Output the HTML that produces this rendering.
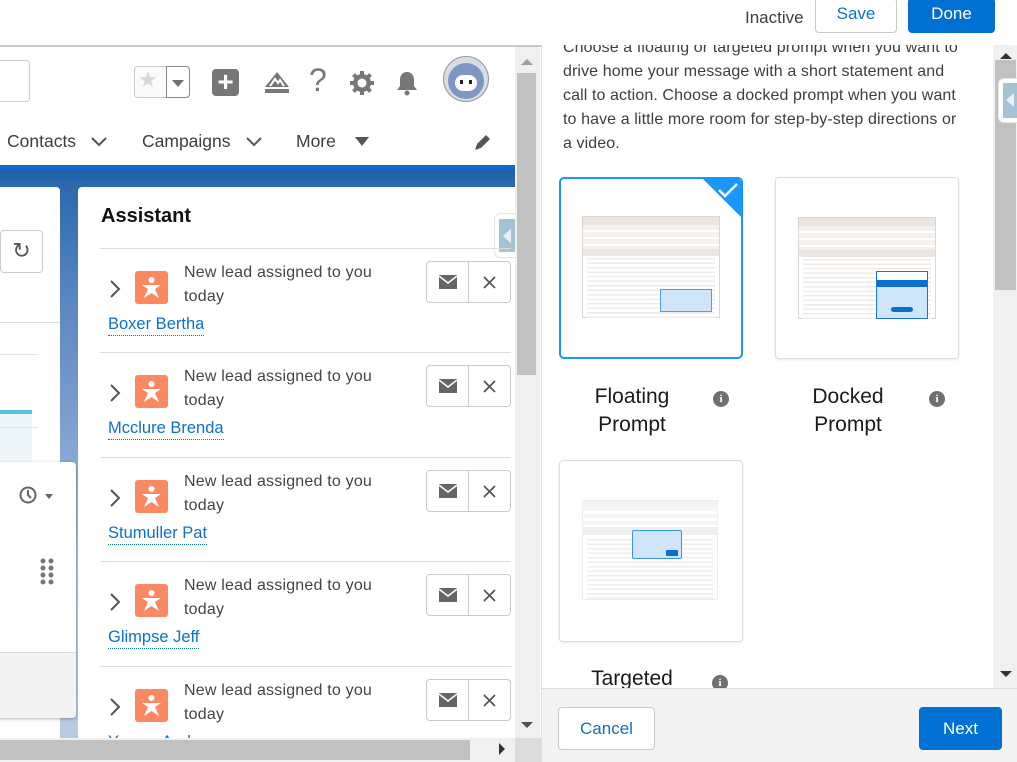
<!DOCTYPE html>
<html><head><meta charset="utf-8"><style>
*{box-sizing:border-box;margin:0;padding:0}
body{width:1017px;height:762px;overflow:hidden;background:#fff;font-family:"Liberation Sans",sans-serif;position:relative;color:#3e3e3c}
.a{position:absolute}
.btn{position:absolute;border:1px solid #c9c9c9;border-radius:4px;background:#fff;font-size:17px;text-align:center}
.item{position:absolute;left:100px;width:411px;height:105px;border-top:1px solid #ddd}
.item .chev{position:absolute;left:8px;top:30px}
.item .ic{position:absolute;left:35px;top:22px;width:33px;height:33px;background:#f88962;border-radius:3px}
.item .t{position:absolute;left:84px;top:12px;font-size:16px;line-height:24px;color:#444;width:210px;letter-spacing:0.2px}
.item .n{position:absolute;left:8px;top:64px;font-size:16.5px;color:#0b71c9;border-bottom:1px dotted #0b71c9;line-height:22px}
.item .bg{position:absolute;left:326px;top:12px;width:85px;height:42px;border:1px solid #c9c9c9;border-radius:4px;background:#fff}
.item .bg i{position:absolute;left:41px;top:0;width:1px;height:40px;background:#c9c9c9}
.card{position:absolute;border:1px solid #ddd;border-radius:4px;background:#fff}
.lbl{position:absolute;font-size:21px;line-height:28px;color:#1a1a1a;text-align:center}
.info{position:absolute;width:16px;height:16px;border-radius:50%;background:#707070;color:#fff;font-size:11px;font-weight:bold;text-align:center;line-height:16px;font-family:"Liberation Serif",serif}
</style></head><body>
<!-- top bar -->
<div class="a" style="left:0;top:45px;width:541px;height:2px;background:#c8c8c8"></div>
<div class="a" style="left:745px;top:8px;font-size:17px;color:#3e3e3c">Inactive</div>
<div class="btn" style="left:815px;top:-2px;width:82px;height:35px;color:#0b71c9;line-height:30px">Save</div>
<div class="btn" style="left:908px;top:-2px;width:87px;height:35px;background:#0070d2;border-color:#0070d2;color:#fff;line-height:30px">Done</div>

<!-- left pane -->
<div class="a" style="left:0;top:47px;width:515px;height:691px;overflow:hidden;background:#fff">
  <div class="a" style="left:-10px;top:13px;width:40px;height:42px;border:1px solid #ccc;border-radius:4px"></div>
  <div class="a" style="left:134px;top:19px;width:56px;height:32px;border:1px solid #ccc;border-radius:4px;background:#fafafa"></div>
  <div class="a" style="left:166px;top:19px;width:24px;height:32px;border:1px solid #888;border-radius:0 4px 4px 0;background:#fff"></div>
  <div class="a" style="left:138px;top:20px;font-size:22px;color:#d8d8d8">★</div>
  <div class="a" style="left:172px;top:33px;border-left:6px solid transparent;border-right:6px solid transparent;border-top:7px solid #707070"></div>
  <div class="a" style="left:212px;top:22px;width:27px;height:27px;background:#777;border-radius:4px;color:#fff;font-size:28px;line-height:25px;text-align:center;font-weight:bold">+</div>
  <svg class="a" style="left:263px;top:22px" width="28" height="28" viewBox="0 0 28 28"><path d="M2 18 L14 3 L26 18 L26 24 L2 24Z" fill="#777"/><path d="M7 17 L12 10 L15 14 L17 11 L21 17" stroke="#fff" stroke-width="2" fill="none"/><path d="M2 19 H26" stroke="#fff" stroke-width="2"/></svg>
  <div class="a" style="left:309px;top:15px;font-size:32px;color:#777">?</div>
  <svg class="a" style="left:349px;top:23px" width="26" height="26" viewBox="0 0 26 26"><circle cx="13" cy="13" r="9" fill="#777"/><g stroke="#777" stroke-width="4"><path d="M13 1v24M1 13h24M4.5 4.5l17 17M21.5 4.5l-17 17"/></g><circle cx="13" cy="13" r="4.5" fill="#fff"/></svg>
  <svg class="a" style="left:393px;top:22px" width="28" height="28" viewBox="0 0 28 28"><path d="M14 3c-5 0-7 4-7 8v6l-3 4h20l-3-4v-6c0-4-2-8-7-8z" fill="#777"/><circle cx="14" cy="24" r="2.5" fill="#777"/></svg>
  <div class="a" style="left:443px;top:9px;width:46px;height:46px;border-radius:50%;background:#d7dde6;border:1px solid #999;overflow:hidden">
    <div class="a" style="left:4px;top:6px;width:36px;height:36px;border-radius:50%;background:#7d96c4"></div>
    <div class="a" style="left:11px;top:18px;width:22px;height:16px;border-radius:8px;background:#fff"></div>
    <div class="a" style="left:16px;top:23px;width:3px;height:4px;background:#222"></div>
    <div class="a" style="left:25px;top:23px;width:3px;height:4px;background:#222"></div>
  </div>
  <!-- nav -->
  <div class="a" style="left:7px;top:84px;font-size:17.5px;color:#3e3e3c">Contacts</div>
  <svg class="a" style="left:90px;top:89px" width="18" height="12"><path d="M2 2l7 7 7-7" stroke="#555" stroke-width="2" fill="none"/></svg>
  <div class="a" style="left:142px;top:84px;font-size:17.5px;color:#3e3e3c">Campaigns</div>
  <svg class="a" style="left:245px;top:89px" width="18" height="12"><path d="M2 2l7 7 7-7" stroke="#555" stroke-width="2" fill="none"/></svg>
  <div class="a" style="left:296px;top:84px;font-size:17.5px;color:#3e3e3c">More</div>
  <div class="a" style="left:355px;top:90px;border-left:7px solid transparent;border-right:7px solid transparent;border-top:9px solid #555"></div>
  <svg class="a" style="left:472px;top:86px" width="20" height="20"><path d="M3 17l2-6 9-9 4 4-9 9z" fill="#555"/></svg>
  <!-- blue bg -->
  <div class="a" style="left:0;top:118px;width:515px;height:4px;background:#0a6cc9"></div>
  <div class="a" style="left:0;top:122px;width:515px;height:580px;background:linear-gradient(#1e5ea6 0px,#2b68ad 15px,#5a86c0 130px,#a8bfdf 400px,#b9cbe3 580px)"></div>
  <!-- left card -->
  <div class="a" style="left:-5px;top:140px;width:65px;height:560px;background:#fff;border-radius:4px"></div>
  <div class="a" style="left:0;top:183px;width:43px;height:43px;border:1px solid #ccc;border-radius:4px;background:#fff;text-align:center;font-size:22px;line-height:40px;color:#555">↻</div>
  <div class="a" style="left:0;top:275px;width:60px;height:1px;background:#ddd"></div>
  <div class="a" style="left:0;top:307px;width:38px;height:1px;background:#e5e5e5"></div>
  <div class="a" style="left:0;top:363px;width:32px;height:4px;background:#5bc0de"></div>
  <div class="a" style="left:0;top:367px;width:32px;height:50px;background:#eef8fb"></div>
  <div class="a" style="left:0;top:380px;width:38px;height:1px;background:#e0e0e0"></div>
  <!-- floating panel -->
  <div class="a" style="left:-5px;top:415px;width:81px;height:256px;background:#fff;border-radius:4px;box-shadow:0 1px 3px rgba(0,0,0,.3);overflow:hidden">
    <div class="a" style="left:0;top:190px;width:81px;height:66px;background:#f3f3f3;border-top:1px solid #ddd"></div>
  </div>
  <svg class="a" style="left:18px;top:438px" width="20" height="20"><circle cx="10" cy="10" r="7.5" stroke="#666" stroke-width="2" fill="none"/><path d="M10 5v5l3 3" stroke="#666" stroke-width="2" fill="none"/></svg>
  <div class="a" style="left:45px;top:447px;border-left:4px solid transparent;border-right:4px solid transparent;border-top:5px solid #666"></div>
  <svg class="a" style="left:40px;top:511px" width="14" height="28"><g fill="#777"><circle cx="3" cy="3" r="2.5"/><circle cx="11" cy="3" r="2.5"/><circle cx="3" cy="10" r="2.5"/><circle cx="11" cy="10" r="2.5"/><circle cx="3" cy="17" r="2.5"/><circle cx="11" cy="17" r="2.5"/><circle cx="3" cy="24" r="2.5"/><circle cx="11" cy="24" r="2.5"/></g></svg>
  <!-- assistant card -->
  <div class="a" style="left:78px;top:140px;width:445px;height:600px;background:#fff;border-radius:4px"></div>
  <div class="a" style="left:101px;top:158px;font-size:20px;font-weight:bold;color:#111">Assistant</div>
  <div class="a" style="left:494px;top:166px;width:22px;height:45px;background:#fff;border-radius:6px 0 0 6px;border:1px solid #e5e5e5"></div>
  <div class="a" style="left:499px;top:172px;width:16px;height:33px;background:#a5c3d3"></div>
  <div class="a" style="left:503px;top:182px;border-top:7px solid transparent;border-bottom:7px solid transparent;border-right:8px solid #e8f0f4"></div>
</div>

<!-- items -->
<div class="item" style="top:248px"></div>
<div class="item" style="top:352px"></div>
<div class="item" style="top:457px"></div>
<div class="item" style="top:561px"></div>
<div class="item" style="top:666px"></div>

<!-- left scrollbars -->
<div class="a" style="left:515px;top:47px;width:25px;height:691px;background:#f0f0f0"></div>
<div class="a" style="left:517px;top:73px;width:19px;height:302px;background:#c1c1c1"></div>
<div class="a" style="left:521px;top:59px;border-left:6px solid transparent;border-right:6px solid transparent;border-bottom:6px solid #a0a0a0"></div>
<div class="a" style="left:521px;top:722px;border-left:6px solid transparent;border-right:6px solid transparent;border-top:6px solid #505050"></div>
<div class="a" style="left:0;top:738px;width:515px;height:24px;background:#f0f0f0"></div>
<div class="a" style="left:0;top:740px;width:470px;height:20px;background:#c1c1c1"></div>
<div class="a" style="left:499px;top:743px;border-top:6px solid transparent;border-bottom:6px solid transparent;border-left:6px solid #333"></div>
<div class="a" style="left:515px;top:738px;width:26px;height:24px;background:#dcdcdc"></div>

<!-- right panel -->
<div class="a" style="left:541px;top:45px;width:476px;height:717px;background:#fff;border-left:1px solid #ddd;overflow:hidden">
  <div class="a" style="left:21px;top:-9px;white-space:nowrap;font-size:16px;line-height:24px;color:#3e3e3c;letter-spacing:0.1px">Choose a floating or targeted prompt when you want to<br>drive home your message with a short statement and<br>call to action. Choose a docked prompt when you want<br>to have a little more room for step-by-step directions or<br>a video.</div>
  <!-- floating card -->
  <div class="card" style="left:17px;top:132px;width:184px;height:182px;border:2px solid #1b96ff;border-radius:5px;overflow:hidden">
    <div class="a" style="right:-1px;top:-1px;width:0;height:0;border-top:40px solid #1b96ff;border-left:40px solid transparent"></div>
    <svg class="a" style="right:2px;top:3px" width="22" height="16"><path d="M2 8l6 6 12-12" stroke="#fff" stroke-width="2.5" fill="none"/></svg>
    <div class="a" style="left:21px;top:37px;width:138px;height:102px;border:1px solid #ddd6d0;background:#fff">
      <div style="height:8px;background:#ebe6e2"></div>
      <div style="height:24px;background:repeating-linear-gradient(#f4f1ee 0 5px,#fff 5px 7px)"></div>
      <div style="height:7px;background:#ebe6e2"></div>
      <div style="height:60px;margin:2px 4px;background:repeating-linear-gradient(#f0ece9 0 1.5px,#fff 1.5px 4.5px)"></div>
    </div>
    <div class="a" style="left:99px;top:110px;width:52px;height:23px;border:1px solid #4aa3ea;background:#cfe6fa"></div>
  </div>
  <div class="lbl" style="left:40px;top:338px;width:100px">Floating<br>Prompt</div>
  <div class="info" style="left:171px;top:346px">i</div>
  <!-- docked card -->
  <div class="card" style="left:233px;top:132px;width:184px;height:182px;box-shadow:0 1px 2px rgba(0,0,0,.08)">
    <div class="a" style="left:22px;top:39px;width:138px;height:102px;border:1px solid #ddd6d0;background:#fff">
      <div style="height:8px;background:#ebe6e2"></div>
      <div style="height:24px;background:repeating-linear-gradient(#f4f1ee 0 5px,#fff 5px 7px)"></div>
      <div style="height:7px;background:#ebe6e2"></div>
      <div style="height:60px;margin:2px 4px;background:repeating-linear-gradient(#f0ece9 0 1.5px,#fff 1.5px 4.5px)"></div>
    </div>
    <div class="a" style="left:100px;top:93px;width:52px;height:48px;border:1px solid #1a75cf;background:#cfe6fa">
      <div style="height:8px;background:#fff"></div><div style="height:7px;background:#0b6fce"></div>
      <div class="a" style="left:14px;top:35px;width:22px;height:5px;border-radius:3px;background:#0b6fce"></div>
    </div>
  </div>
  <div class="lbl" style="left:256px;top:338px;width:100px">Docked<br>Prompt</div>
  <div class="info" style="left:387px;top:346px">i</div>
  <!-- targeted card -->
  <div class="card" style="left:17px;top:415px;width:184px;height:182px;box-shadow:0 1px 2px rgba(0,0,0,.08)">
    <div class="a" style="left:22px;top:39px;width:136px;height:100px;border:1px solid #eee;background:#fff">
      <div style="height:6px;background:#f3f3f3"></div>
      <div style="height:20px;background:repeating-linear-gradient(#f6f6f6 0 4px,#fff 4px 7px)"></div>
      <div style="height:8px;background:#f0f0f0"></div>
      <div style="height:60px;margin:4px;background:repeating-linear-gradient(#eeeeee 0 1.5px,#fff 1.5px 4.5px)"></div>
    </div>
    <div class="a" style="left:72px;top:69px;width:50px;height:29px;border:1px solid #3b94e6;border-radius:2px;background:#cfe6fa"><div class="a" style="left:33px;top:19px;width:12px;height:6px;background:#0b6fce;border-radius:1px"></div></div>
  </div>
  <div class="lbl" style="left:40px;top:620px;width:100px">Targeted</div>
  <div class="info" style="left:170px;top:630px">i</div>
  <!-- right scrollbar -->
  <div class="a" style="left:451px;top:0;width:25px;height:643px;background:#f0f0f0"></div>
  <div class="a" style="left:453px;top:15px;width:21px;height:230px;background:#c1c1c1"></div>
  <div class="a" style="left:458px;top:8px;border-left:6px solid transparent;border-right:6px solid transparent;border-bottom:6px solid #333"></div>
  <div class="a" style="left:458px;top:626px;border-left:6px solid transparent;border-right:6px solid transparent;border-top:6px solid #333"></div>
  <div class="a" style="left:456px;top:33px;width:22px;height:45px;background:#fff;border-radius:6px 0 0 6px;border:1px solid #e5e5e5"></div>
  <div class="a" style="left:461px;top:38px;width:16px;height:35px;background:#a5c3d3"></div>
  <div class="a" style="left:464px;top:48px;border-top:7px solid transparent;border-bottom:7px solid transparent;border-right:8px solid #e8f0f4"></div>
  <!-- footer -->
  <div class="a" style="left:0;top:643px;width:476px;height:74px;background:#f3f3f3;border-top:1px solid #ddd"></div>
  <div class="btn" style="left:16px;top:662px;width:97px;height:43px;color:#0b71c9;line-height:41px">Cancel</div>
  <div class="btn" style="left:377px;top:662px;width:83px;height:43px;background:#0070d2;border-color:#0070d2;color:#fff;line-height:41px">Next</div>
</div>

<script>
var names=["Boxer Bertha","Mcclure Brenda","Stumuller Pat","Glimpse Jeff","Yocum Andy"];
var els=document.querySelectorAll('.item');
els.forEach(function(e,i){
e.innerHTML='<svg class="chev" width="14" height="20"><path d="M3 2l8 8-8 8" stroke="#555" stroke-width="2" fill="none"/></svg>'+
'<div class="ic"><svg width="33" height="33"><circle cx="16.5" cy="9" r="3" fill="#fff"/><path d="M7 14h19l-6 4 4 9-7.5-5-7.5 5 4-9z" fill="#fff"/></svg></div>'+
'<div class="t">New lead assigned to you today</div>'+
'<div class="n">'+names[i]+'</div>'+
'<div class="bg"><i></i><svg class="a" style="left:12px;top:13px" width="18" height="14"><path d="M0 0h18v14H0z" fill="#666"/><path d="M0 1l9 7 9-7" stroke="#fff" stroke-width="1.5" fill="none"/></svg><svg class="a" style="left:56px;top:14px" width="13" height="13"><path d="M1 1l11 11M12 1L1 12" stroke="#555" stroke-width="1.8"/></svg></div>';
if(i==4){e.style.height='72px';e.style.overflow='hidden';}
});
</script>
</body></html>
